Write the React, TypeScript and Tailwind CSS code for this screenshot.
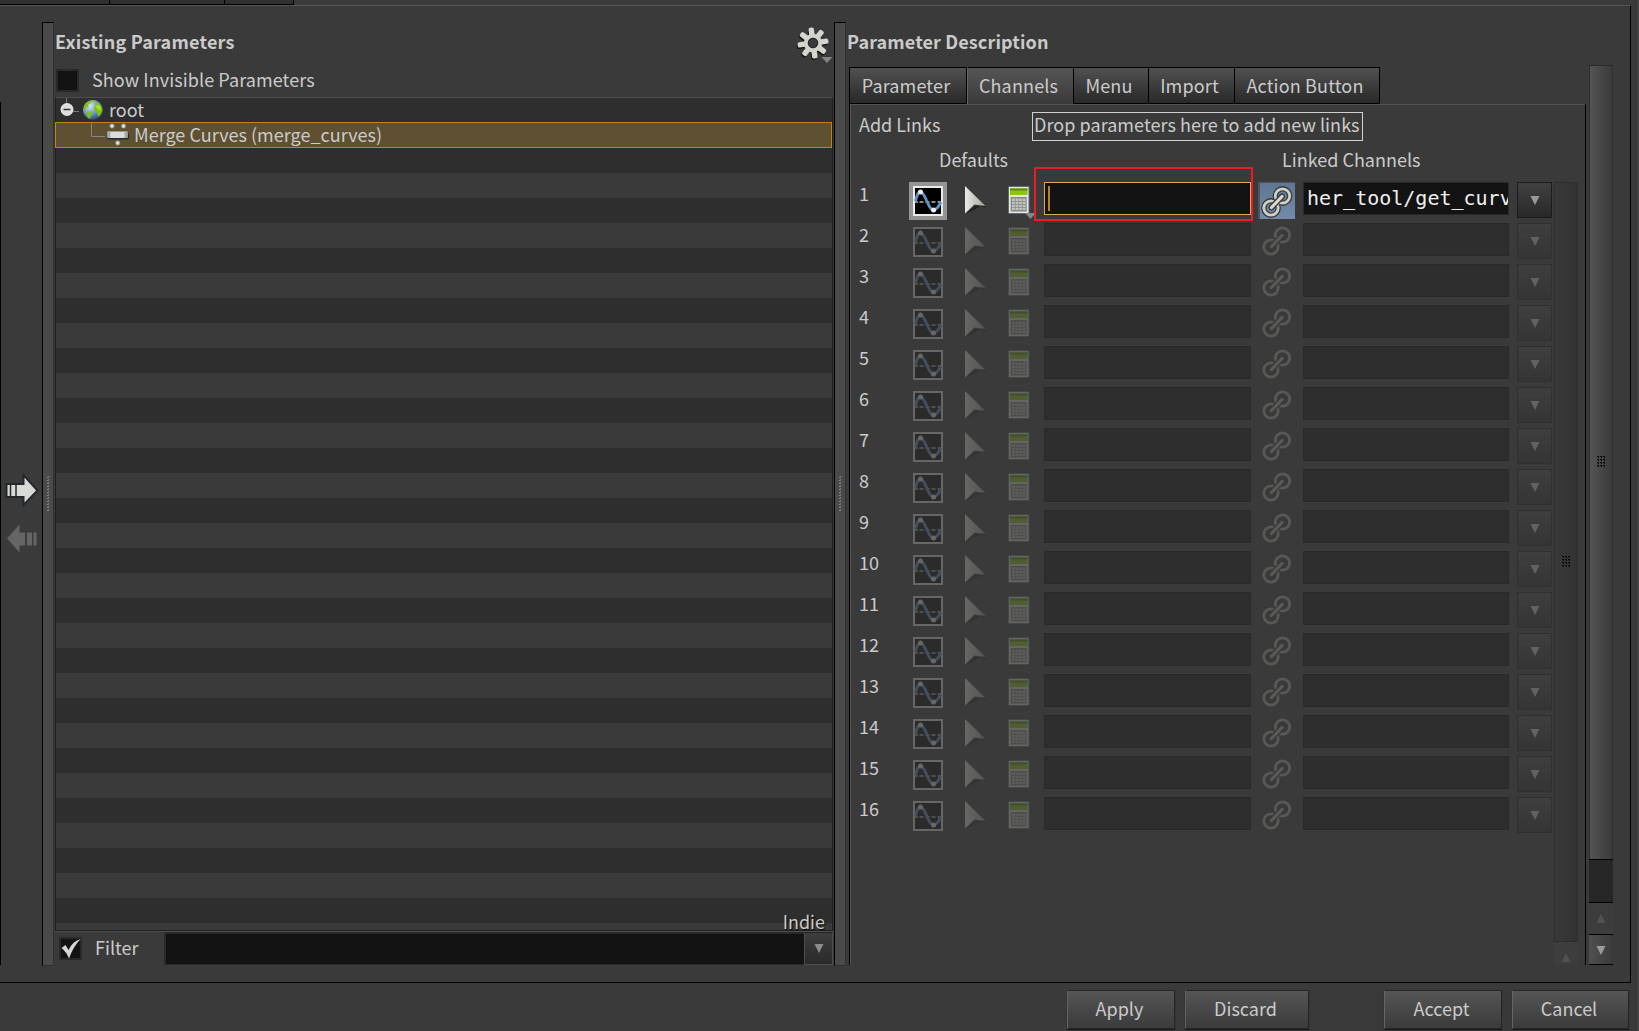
import type { ReactNode } from 'react';
import clsx from 'clsx';

const TABS = [
    { label: 'Parameter', className: 'w-[117px]' },
    { label: 'Channels', className: 'w-[107px]' },
    { label: 'Menu', className: 'w-[75px]' },
    { label: 'Import', className: 'w-[86px]' },
    { label: 'Action Button', className: 'w-[145px]' },
];

const CHANNELS = Array.from({ length: 16 }, (_, i) => i + 1);
const STRIPES = Array.from({ length: 33 }, (_, i) => i);

const GearIcon = () => (
    <svg width="38" height="38" viewBox="0 0 38 38">
        <g transform="translate(18 18)">
            {[-8, 37, 82, 127, 172, 217, 262, 307].map(a => (
                <rect key={`s${a}`} x="-2.600" y="-15.500" width="5.400" height="10" rx="1.800" fill="#151515" transform={`translate(-.8 1.500) rotate(${a})`} />
            ))}
            {[-8, 37, 82, 127, 172, 217, 262, 307].map(a => (
                <rect key={a} x="-2.600" y="-15.500" width="5.400" height="10" rx="1.800" fill="#d6d6d0" transform={`rotate(${a})`} />
            ))}
            <circle r="7" fill="none" stroke="#d2d2cc" strokeWidth="4.400" />
            <circle r="4.800" fill="#3a3a3a" stroke="#222" strokeWidth="1" />
        </g>
        <path d="M26.500 32h11l-5.500 6z" fill="#858585" />
    </svg>
);

const GlobeIcon = () => (
    <svg width="22" height="22" viewBox="0 0 22 22">
        <defs>
            <radialGradient id="sea" cx=".35" cy=".3" r=".75">
                <stop offset="0" stopColor="#d5e4f2" />
                <stop offset=".55" stopColor="#6c97c8" />
                <stop offset="1" stopColor="#1e3c6c" />
            </radialGradient>
        </defs>
        <circle cx="11" cy="11" r="10" fill="url(#sea)" />
        <path d="M2 7q2-4 6-5.500l2 .5-2 2.500-2 .5 1 2.500-3 1-1 3-1.500-1zM4.500 12.500l4 0 1.500 2.500-2.500 5q-3-2-3-7.500zM12 8l2-3 3-1q3 3 3.500 7l-1.500 4-3 3-1-4-2.500-1.500zM10 1l4 .8-2 2z" fill="#7fc012" />
        <path d="M13 7.500l3-2 3 3-1 3-2-1z" fill="#a9e02e" />
    </svg>
);

const MergeIcon = () => (
    <svg width="24" height="24" viewBox="0 0 24 24">
        <rect x="1" y="9.500" width="22" height="7" rx="1.500" fill="#252a33" />
        <rect x="1.500" y="8.500" width="20" height="6.500" rx="1" fill="#dcdcdc" />
        <path d="M1.500 8.500h3v6.500h-3zM18.500 8.500h3v6.500h-3z" fill="#a6a9ab" />
        <circle cx="6" cy="3" r="2.300" fill="#ddd" stroke="#777" strokeWidth=".8" />
        <circle cx="17.500" cy="3" r="2.300" fill="#ddd" stroke="#777" strokeWidth=".8" />
        <circle cx="11.700" cy="20" r="2.300" fill="#ddd" stroke="#777" strokeWidth=".8" />
    </svg>
);

const WaveIcon = () => (
    <svg width="30" height="30" viewBox="0 0 30 30" className="block">
        <rect x="1" y="1" width="28" height="28" fill="#000" stroke="#ebebeb" strokeWidth="2" />
        <path d="M2 16h3M6.500 16h4M12.500 16h4M18.500 16h4M24.500 16H28" stroke="#8b8b86" strokeWidth="1.800" />
        <path d="M2.500 15C4 9 5 6 7.500 6c5 0 7.500 18 13 18 3 0 5-3 7.500-8" fill="none" stroke="#6490c6" strokeWidth="2.800" />
        <circle cx="7.500" cy="6" r="2.500" fill="#eee" />
        <circle cx="20.500" cy="24" r="2.500" fill="#eee" />
    </svg>
);

const CursorIcon = () => (
    <svg width="24" height="30" viewBox="0 0 24 30" className="block">
        <defs>
            <linearGradient id="cur" x1="0" x2="1">
                <stop offset="0" stopColor="#ebebe7" />
                <stop offset="1" stopColor="#a0a09a" />
            </linearGradient>
        </defs>
        <path d="M2 28L11 19.500l11 2-2-3z" fill="#222" />
        <path d="M1 0L21.500 20l-11-1.500-9.500 9z" fill="url(#cur)" />
    </svg>
);

const CalculatorIcon = () => (
    <svg width="22" height="29" viewBox="0 0 22 29" className="block">
        <rect x=".5" y=".5" width="20.500" height="27" rx="1" fill="#e4e6e1" stroke="#5d6f72" />
        <rect x="2" y="2.500" width="17.500" height="6.500" fill="#8fc512" />
        <path d="M2 3.500h17.500" stroke="#5c8a00" strokeWidth="2" />
        <rect x="2.700" y="11" width="16" height="14.500" fill="#84867f" />
        <rect x="4" y="12.500" width="13.500" height="11.500" fill="#c3c4bf" />
        <path d="M7.300 12.500v11.500M10.800 12.500v11.500M14.300 12.500v11.500M4 15.500h13.500M4 18.500h13.500M4 21.500h13.500" stroke="#8e908b" strokeWidth=".9" />
    </svg>
);

const LinkIcon = () => (
    <svg width="37" height="37" viewBox="0 0 37 37" className="block">
        <g fill="none" strokeLinecap="round">
            <g stroke="#3a3a38" strokeWidth="5.400">
                <circle cx="24.500" cy="13" r="7.200" />
                <circle cx="13" cy="25" r="7.200" />
            </g>
            <g stroke="#d0d0cb" strokeWidth="2.800">
                <circle cx="24.500" cy="13" r="7.200" />
                <circle cx="13" cy="25" r="7.200" />
            </g>
            <path d="M13.500 24.500L24 13.500" stroke="#3a3a38" strokeWidth="6" />
            <path d="M13.500 24.500L24 13.500" stroke="#d9d9d4" strokeWidth="3.200" />
        </g>
    </svg>
);

const Triangle = ({ up, color = '#8c8c8c' }: { up?: boolean; color?: string }) => (
    <svg width="10" height="9" viewBox="0 0 10 9" className="block shrink-0">
        <path d={up ? 'M.5 9L5 0l4.500 9z' : 'M.5 0h9L5 9z'} fill={color} />
    </svg>
);

// 3x4 drag handle dots
const Grip = () => (
    <svg width="9" height="12" viewBox="0 0 9 12" className="block shrink-0">
        {[0, 3, 6].map(x => [0, 3, 6, 9].map(y => (
            <path key={`${x}-${y}`} d={`M${x} ${y}h2v2h-1v-1h-1z`} fill="#0a0a0a" />
        )))}
    </svg>
);

const Splitter = () => (
    <div className="mt-4 flex h-[944px] w-3 shrink-0 items-center justify-center border-b border-l border-r border-t border-b-[#303030] border-l-black border-r-[#303030] border-t-black bg-[#4a4a4a]">
        <svg width="3" height="36" viewBox="0 0 3 36">
            {Array.from({ length: 12 }, (_, i) => (
                <path key={i} d={`M1 ${i * 3}h1v1h-2v1h2z`} fill="#858585" />
            ))}
        </svg>
    </div>
);

const PushButton = ({ className, children }: { className: string; children: ReactNode }) => (
    <button
        className={clsx(
            'h-[39px] shrink-0 border border-[#262626] border-l-[#646464] bg-linear-to-b from-[#555] to-[#3b3b3b] pb-[3px] pr-[3px] leading-none shadow-[0_1px_1px_#1c1c1c]',
            className,
        )}
    >
        {children}
    </button>
);

const ChannelRow = ({ index }: { index: number }) => {
    const active = index === 1;
    const dim = active ? '' : 'opacity-25';
    return (
        <div className="flex h-[41px] items-start">
            <div className="w-[50px] shrink-0 leading-[23px]">{index}</div>
            <div className={clsx('h-[38px] w-[38px] shrink-0 p-1', active && 'bg-[#939393]')}>
                <div className={dim}><WaveIcon /></div>
            </div>
            <div className={clsx('ml-[17px] mt-1 w-6 shrink-0', dim)}><CursorIcon /></div>
            <div className={clsx('relative ml-5 mt-1 w-[22px] shrink-0', dim)}>
                <CalculatorIcon />
                {active && (
                    <svg width="11" height="6" viewBox="0 0 11 6" className="absolute left-[17px] top-[27px]">
                        <path d="M0 0h11L5.500 6z" fill="#858585" />
                    </svg>
                )}
            </div>
            <div
                className={clsx(
                    'relative ml-[14px] h-[33px] w-[207px] shrink-0 border',
                    active ? 'border-[#dba758] bg-[#131313]' : 'border-[#292929] bg-[#2e2e2e]',
                )}
            >
                {active && (
                    <>
                        <div className="ml-[3px] mt-[3px] h-[25px] w-0.5 bg-[#b8841e]" />
                        {/* annotation frame around the focused field */}
                        <div className="absolute -left-[11px] -top-4 h-[54px] w-[219px] border-2 border-[#ed1c24]" />
                    </>
                )}
            </div>
            <div className={clsx('ml-[7px] h-[37px] w-[37px] shrink-0', active && 'border-l-2 border-t border-[#4d555d] bg-linear-to-b from-[#5f7794] to-[#728baa]')}>
                <div className={clsx(active ? '-ml-0.5' : '-mt-px opacity-20')}><LinkIcon /></div>
            </div>
            <div
                className={clsx(
                    'ml-2 h-[33px] w-[206px] shrink-0 overflow-hidden whitespace-nowrap border border-[#292929] font-["DejaVu_Sans_Mono",monospace] text-[20px] leading-[31px] text-[#f0f0f0]',
                    active ? 'bg-[#131313] pl-[3px]' : 'bg-[#2e2e2e]',
                )}
            >
                {active && 'her_tool/get_curv'}
            </div>
            <div
                className={clsx(
                    'ml-2 flex h-9 w-[35px] shrink-0 items-center justify-center border pl-px pt-px',
                    active
                        ? 'border-[#1c1c1c] bg-linear-to-b from-[#414141] to-[#292929]'
                        : 'border-[#303030] bg-linear-to-b from-[#3e3e3e] to-[#353535]',
                )}
            >
                <Triangle color={active ? '#999' : '#626262'} />
            </div>
        </div>
    );
};

const ExistingParameters = () => (
    <div className="flex w-[780px] shrink-0 flex-col">
        <div className="flex h-[57px] shrink-0 items-center justify-between">
            <h2 className="-mt-4 ml-px pt-7 text-[18px] font-bold leading-7 tracking-[0.22px]">Existing Parameters</h2>
            <div className="mr-px mt-[18px]"><GearIcon /></div>
        </div>
        <div className="flex h-[34px] shrink-0 items-center">
            <div className="ml-0.5 h-[23px] w-[23px] border-2 border-[#2a2a2a] bg-[#131313]" />
            <span className="-mt-0.5 ml-[13px] leading-6 tracking-[0.08px]">Show Invisible Parameters</span>
        </div>
        <div className="relative ml-px h-[834px] w-[778px] shrink-0 border border-[#1f1f1f] border-t-[#4d4d4d]">
            {STRIPES.map(i => (
                <div key={i} className="flow-root h-[25px] odd:bg-[#2e2e2e]">
                    {i === 0 && (
                        <div className="flex h-[25px] items-center">
                            <svg width="24" height="25" viewBox="0 0 24 25" className="ml-1">
                                <path d="M6.500 0v10M12 13.500h7" stroke="#777" />
                                <circle cx="7" cy="11.500" r="6.500" fill="#dedede" />
                                <path d="M3.500 11.500h7" stroke="#333" strokeWidth="1.500" />
                            </svg>
                            <div className="-ml-[2px] -mt-0.5"><GlobeIcon /></div>
                            <span className="-mt-[3px] ml-[5px] leading-6">root</span>
                        </div>
                    )}
                    {i === 1 && (
                        <div className="-ml-px -mt-px flex h-[26px] items-center border border-[#b9851d] bg-[#5e5031]">
                            <svg width="14" height="24" viewBox="0 0 14 24" className="ml-[35px]">
                                <path d="M.5 0v13.500H14" fill="none" stroke="#858585" />
                            </svg>
                            <div className="ml-px"><MergeIcon /></div>
                            <span className="-mt-0.5 ml-1 leading-6 tracking-[0.02px]">Merge Curves (merge_curves)</span>
                        </div>
                    )}
                </div>
            ))}
            <div className="absolute bottom-[-3px] right-[7px] z-10 leading-6 [text-shadow:1px_1px_1px_#000]">Indie</div>
        </div>
        <div className="flex h-[34px] shrink-0 items-start border-t border-[#505050]">
            <div className="ml-[5px] mt-[5px] h-[23px] w-[23px] border-2 border-[#292929] bg-[#131313]">
                <svg width="22" height="22" viewBox="0 0 22 22" className="block">
                    <path d="M.5 9l4-3 3 5Q12 2 19.500 0 12 8 8 19.500 5.500 13 .5 9z" fill="#d6d6d6" />
                </svg>
            </div>
            <span className="ml-[13px] mt-[3px] w-[69px] leading-6">Filter</span>
            <div className="h-[33px] w-[640px] border-2 border-b border-r-0 border-[#292929] bg-[#131313]" />
            <div className="flex h-[33px] w-[29px] items-center justify-center border border-[#4d4d4d] border-t-[#222] bg-linear-to-b from-[#3d3d3d] to-[#2a2a2a] pl-px">
                <Triangle />
            </div>
        </div>
    </div>
);

const ParameterDescription = () => (
    <div className="flex w-[784px] shrink-0 flex-col">
        <h2 className="ml-px h-[59px] pt-[21px] text-[18px] font-bold leading-7 tracking-[0.12px]">Parameter Description</h2>
        <div className="flex">
            <div className="ml-[3px] w-[737px] shrink-0">
                <div className="mt-0.5 flex h-[37px] w-[531px] border-l border-black">
                    {TABS.map(tab => (
                        <div
                            key={tab.label}
                            className={clsx(
                                'flex items-center justify-center border-r border-t border-black pb-px pr-1 tracking-[0.15px]',
                                tab.label === 'Channels'
                                    ? 'border-l border-l-[#666] bg-linear-to-b from-[#555] to-[#3a3a3a]'
                                    : 'border-b bg-linear-to-b from-[#515151] to-[#292929]',
                                tab.className,
                            )}
                        >
                            {tab.label}
                        </div>
                    ))}
                </div>
                <div className="h-[861px] border-l border-r border-black">
                    <div className="h-[861px] border-l border-t border-[#555] pl-2">
                        <div className="flex h-9 items-end">
                            <span className="w-[173px] pb-[3px] leading-7">Add Links</span>
                            <div className="h-[29px] w-[331px] whitespace-nowrap border border-[#d0d0d0] pl-px leading-[23px] tracking-[0.05px]">
                                Drop parameters here to add new links
                            </div>
                        </div>
                        <div className="flex h-[41px]">
                            <span className="ml-20 w-[343px] pt-1 leading-7">Defaults</span>
                            <span className="pt-1 leading-7">Linked Channels</span>
                        </div>
                        <div className="flex">
                            <div className="w-[693px] shrink-0">
                                {CHANNELS.map(n => <ChannelRow key={n} index={n} />)}
                            </div>
                            <div className="ml-0.5 flex w-6 shrink-0 flex-col items-center">
                                <div className="flex h-[760px] w-6 items-center justify-center border border-[#2e2e2e] bg-linear-to-r from-[#393939] to-[#323232]">
                                    <Grip />
                                </div>
                                <div className="flex h-[23px] w-6 items-end justify-center bg-[#3d3d3d] pb-[3px]"><Triangle up color="#515151" /></div>
                            </div>
                        </div>
                    </div>
                </div>
            </div>
            <div className="ml-[3px] flex h-[900px] w-6 shrink-0 flex-col">
                <div className="flex h-[794px] shrink-0 items-center justify-center border-x border-t border-x-[#303030] border-t-[#2a2a2a] bg-linear-to-r from-[#545454] to-[#3a3a3a] pb-0.5">
                    <Grip />
                </div>
                <div className="h-11 shrink-0 border-b border-t border-black bg-[#272727]" />
                <div className="flex h-[31px] shrink-0 items-center justify-center bg-[#3d3d3d]"><Triangle up color="#515151" /></div>
                <div className="flex h-[31px] shrink-0 items-center justify-center border-y border-black bg-linear-to-r from-[#505050] to-[#3a3a3a] pt-px"><Triangle color="#999" /></div>
            </div>
        </div>
    </div>
);

export default function App() {
    return (
        <div className="flex h-[1031px] w-[1639px] flex-col overflow-hidden border-r border-[#4a4a4a] bg-[#3a3a3a] font-['Noto_Sans_CJK_SC','Noto_Sans_CJK_JP',sans-serif] text-[18px] text-[#cbcbcb]">
            <div className="flex h-[5px] shrink-0">
                <div className="w-[110px] border-b border-r border-black bg-[#303030]" />
                <div className="w-[115px] border-b border-r border-black bg-[#303030]" />
                <div className="w-[69px] border-b border-r border-black bg-[#303030]" />
            </div>
            <div className="flex h-[978px] w-[1631px] shrink-0 border-b border-r border-t border-black border-t-[#555]">
                <div className="flex w-[42px] shrink-0 flex-col pt-24">
                    <div className="h-[863px] border-l border-black pt-[370px]">
                        <svg width="34" height="36" viewBox="0 0 34 36" className="ml-1 block">
                            <path d="M1.500 12h17V3L32.500 18.500 18.500 33v-8h-17z" fill="#d9d9d6" stroke="#23282c" strokeWidth="2" />
                            <path d="M5.500 11v15M11 11v15" stroke="#23282c" strokeWidth="1.500" />
                        </svg>
                        <svg width="34" height="36" viewBox="0 0 34 36" className="ml-1.5 mt-3 block">
                            <path d="M0 18.500L12.500 4.500v8H18v13h-5.500v7zM20 12.500h5v13h-5zM26.500 12.500h3v13h-3z" fill="#656565" />
                        </svg>
                    </div>
                </div>
                <Splitter />
                <ExistingParameters />
                <Splitter />
                <ParameterDescription />
            </div>
            <div className="flex pl-[1067px] pt-[7px]">
                <PushButton className="w-[108px]">Apply</PushButton>
                <PushButton className="ml-2.5 w-[124px]">Discard</PushButton>
                <PushButton className="ml-[75px] w-[118px]">Accept</PushButton>
                <PushButton className="ml-2.5 w-[117px]">Cancel</PushButton>
            </div>
        </div>
    );
}
